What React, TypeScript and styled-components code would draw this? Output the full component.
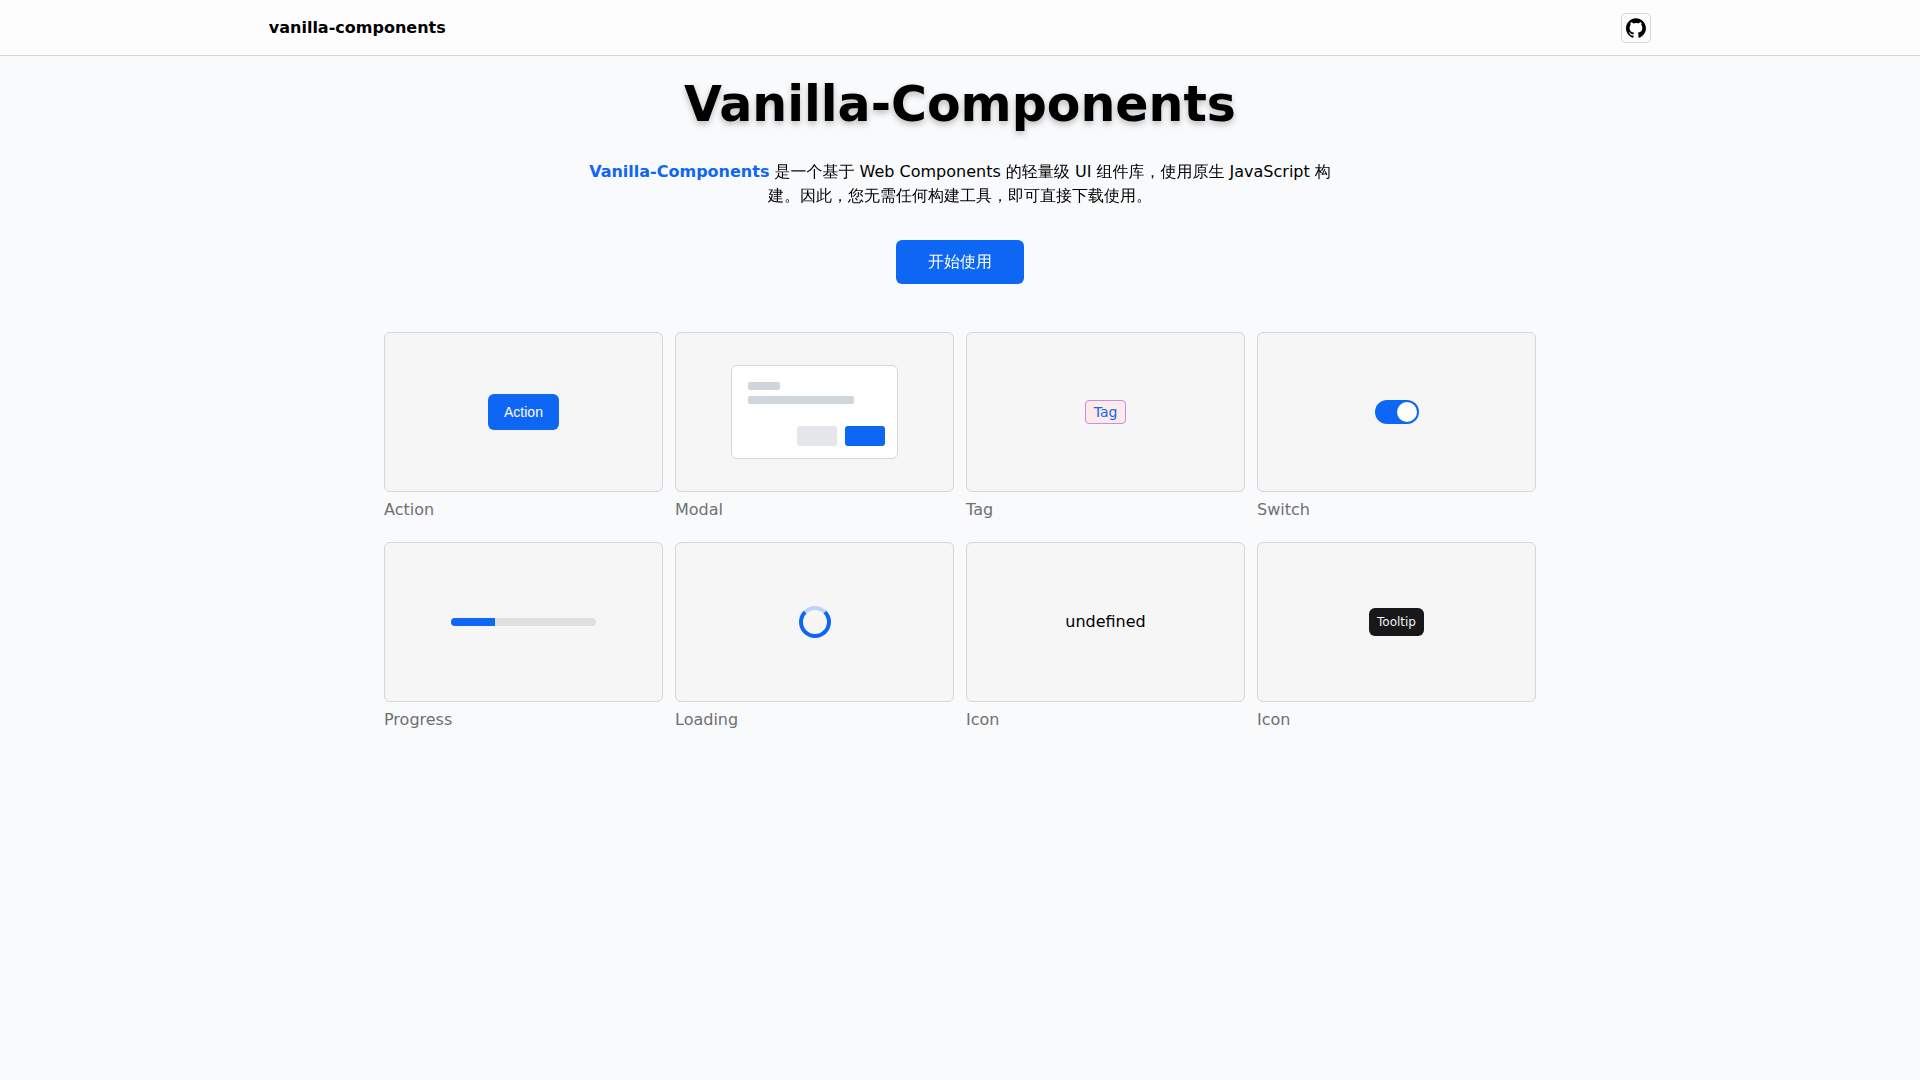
import React from "react";
import styled, { createGlobalStyle } from "styled-components";

const blue = "#0e66f5";
const line = "#d6d6d8";

const GlobalStyle = createGlobalStyle`
  *, *::before, *::after { box-sizing: border-box; }
  body {
    margin: 0;
    background: #f9fafc;
    color: #000;
    font: 16px/24px "DejaVu Sans", "WenQuanYi Zen Hei", "WenQuanYi Micro Hei", "Droid Sans Fallback", "Noto Sans CJK SC", sans-serif;
  }
`;

const Header = styled.header`
  display: flex;
  align-items: center;
  justify-content: space-between;
  height: 56px;
  padding: 0 14%;
  background: #fdfdfe;
  border-bottom: 1px solid ${line};
`;

const Brand = styled.a`
  color: inherit;
  font-weight: 700;
  text-decoration: none;
`;

const IconLink = styled.a`
  display: flex;
  align-items: center;
  justify-content: center;
  width: 30px;
  height: 30px;
  border: 1px solid ${line};
  border-radius: 4px;
  color: #000;
`;

const Main = styled.main`
  display: flex;
  flex-direction: column;
  align-items: center;
  padding: 20px 20% 48px;
`;

const Title = styled.h1`
  margin: 0;
  font-size: 49px;
  line-height: 58px;
  text-shadow: 0 3px 6px rgba(0, 0, 0, 0.25);
`;

const Intro = styled.p`
  max-width: 768px;
  margin: 26px 0 32px;
  text-align: center;
`;

const Accent = styled.strong`
  color: ${blue};
`;

const StartButton = styled.button`
  height: 44px;
  padding: 0 32px;
  border: 0;
  border-radius: 6px;
  background: ${blue};
  color: #fff;
  font: inherit;
  cursor: pointer;
`;

const Gallery = styled.section`
  display: grid;
  grid-template-columns: repeat(4, 1fr);
  gap: 20px 12px;
  width: 100%;
  margin-top: 48px;
`;

const Card = styled.figure`
  margin: 0;
`;

const Preview = styled.div`
  display: flex;
  align-items: center;
  justify-content: center;
  height: 160px;
  border: 1px solid ${line};
  border-radius: 6px;
  background: #f6f6f6;
`;

const Caption = styled.figcaption`
  margin-top: 6px;
  color: #707070;
`;

const ActionButton = styled.button`
  height: 36px;
  padding: 0 16px;
  border: 0;
  border-radius: 6px;
  background: ${blue};
  color: #fff;
  font: 14px/20px "Liberation Sans", sans-serif;
  cursor: pointer;
`;

const MiniModal = styled.div`
  display: flex;
  flex-direction: column;
  gap: 6px;
  width: 60%;
  height: 94px;
  padding: 16px 12px 12px 16px;
  border: 1px solid ${line};
  border-radius: 6px;
  background: #fff;
`;

const Skeleton = styled.div<{ $width: string }>`
  width: ${(p) => p.$width};
  height: 8px;
  border-radius: 2px;
  background: #d0d5dc;
`;

const MiniActions = styled.div`
  display: flex;
  justify-content: flex-end;
  gap: 8px;
  margin-top: auto;
`;

const MiniButton = styled.span<{ $primary?: boolean }>`
  width: 40px;
  height: 20px;
  border-radius: 3px;
  background: ${(p) => (p.$primary ? blue : "#e5e6ea")};
`;

const TagBox = styled.span`
  padding: 0 8px;
  border: 1px solid #c48ee6;
  border-radius: 4px;
  background: #ffeaea;
  color: ${blue};
  font-size: 14px;
  line-height: 22px;
`;

const Switch = styled.input`
  display: flex;
  align-items: center;
  appearance: none;
  width: 44px;
  height: 24px;
  margin: 0;
  padding: 2px;
  border-radius: 12px;
  background: #ccc;
  cursor: pointer;

  &::before {
    content: "";
    width: 20px;
    height: 20px;
    border-radius: 50%;
    background: #fff;
  }

  &:checked {
    justify-content: flex-end;
    background: ${blue};
  }
`;

const ProgressTrack = styled.progress`
  appearance: none;
  width: 145px;
  height: 8px;
  border: 0;
  border-radius: 4px;
  overflow: hidden;
  background: #dfdfdf;

  &::-webkit-progress-bar { background: #dfdfdf; }
  &::-webkit-progress-value { background: ${blue}; }
`;

const Spinner = styled.div`
  width: 32px;
  height: 32px;
  border: 4px solid ${blue};
  border-top-color: #bfd3f8;
  border-radius: 50%;
`;

const TooltipBubble = styled.span`
  padding: 4px 8px;
  border-radius: 6px;
  background: #18181a;
  color: #f2f2f2;
  font-size: 12px;
  line-height: 20px;
`;

const GithubMark = () => (
  <svg width="20" height="20" viewBox="0 0 98 96" fill="currentColor" aria-hidden="true">
    <path d="M48.854 0C21.839 0 0 22 0 49.217c0 21.756 13.993 40.172 33.405 46.69 2.427.49 3.316-1.059 3.316-2.362 0-1.141-.08-5.052-.08-9.127-13.59 2.934-16.42-5.867-16.42-5.867-2.184-5.704-5.42-7.17-5.42-7.17-4.448-3.015.324-3.015.324-3.015 4.934.326 7.523 5.052 7.523 5.052 4.367 7.496 11.404 5.378 14.235 4.074.404-3.178 1.699-5.378 3.074-6.6-10.839-1.141-22.243-5.378-22.243-24.283 0-5.378 1.94-9.778 5.014-13.2-.485-1.222-2.184-6.275.486-13.038 0 0 4.125-1.304 13.426 5.052a46.97 46.97 0 0 1 12.214-1.63c4.125 0 8.33.571 12.213 1.63 9.302-6.356 13.427-5.052 13.427-5.052 2.67 6.763.97 11.816.485 13.038 3.155 3.422 5.015 7.822 5.015 13.2 0 18.905-11.404 23.06-22.324 24.283 1.78 1.548 3.316 4.481 3.316 9.126 0 6.6-.08 11.897-.08 13.526 0 1.304.89 2.853 3.316 2.364 19.412-6.52 33.405-24.935 33.405-46.691C97.707 22 75.788 0 48.854 0z" />
  </svg>
);

const samples: { name: string; preview: React.ReactNode }[] = [
  { name: "Action", preview: <ActionButton type="button">Action</ActionButton> },
  {
    name: "Modal",
    preview: (
      <MiniModal>
        <Skeleton $width="32px" />
        <Skeleton $width="106px" />
        <MiniActions>
          <MiniButton />
          <MiniButton $primary />
        </MiniActions>
      </MiniModal>
    ),
  },
  { name: "Tag", preview: <TagBox>Tag</TagBox> },
  { name: "Switch", preview: <Switch type="checkbox" role="switch" aria-label="Switch" defaultChecked /> },
  { name: "Progress", preview: <ProgressTrack value={30} max={100} aria-label="Progress" /> },
  { name: "Loading", preview: <Spinner role="status" aria-label="Loading" /> },
  { name: "Icon", preview: "undefined" },
  { name: "Icon", preview: <TooltipBubble>Tooltip</TooltipBubble> },
];

export default function App() {
  return (
    <>
      <GlobalStyle />
      <Header>
        <Brand href="#">vanilla-components</Brand>
        <IconLink href="#" aria-label="GitHub">
          <GithubMark />
        </IconLink>
      </Header>
      <Main>
        <Title>Vanilla-Components</Title>
        <Intro>
          <Accent>Vanilla-Components</Accent> 是一个基于 Web Components 的轻量级 UI 组件库，使用原生 JavaScript
          构建。因此，您无需任何构建工具，即可直接下载使用。
        </Intro>
        <StartButton type="button">开始使用</StartButton>
        <Gallery>
          {samples.map((sample, index) => (
            <Card key={index}>
              <Preview>{sample.preview}</Preview>
              <Caption>{sample.name}</Caption>
            </Card>
          ))}
        </Gallery>
      </Main>
    </>
  );
}
